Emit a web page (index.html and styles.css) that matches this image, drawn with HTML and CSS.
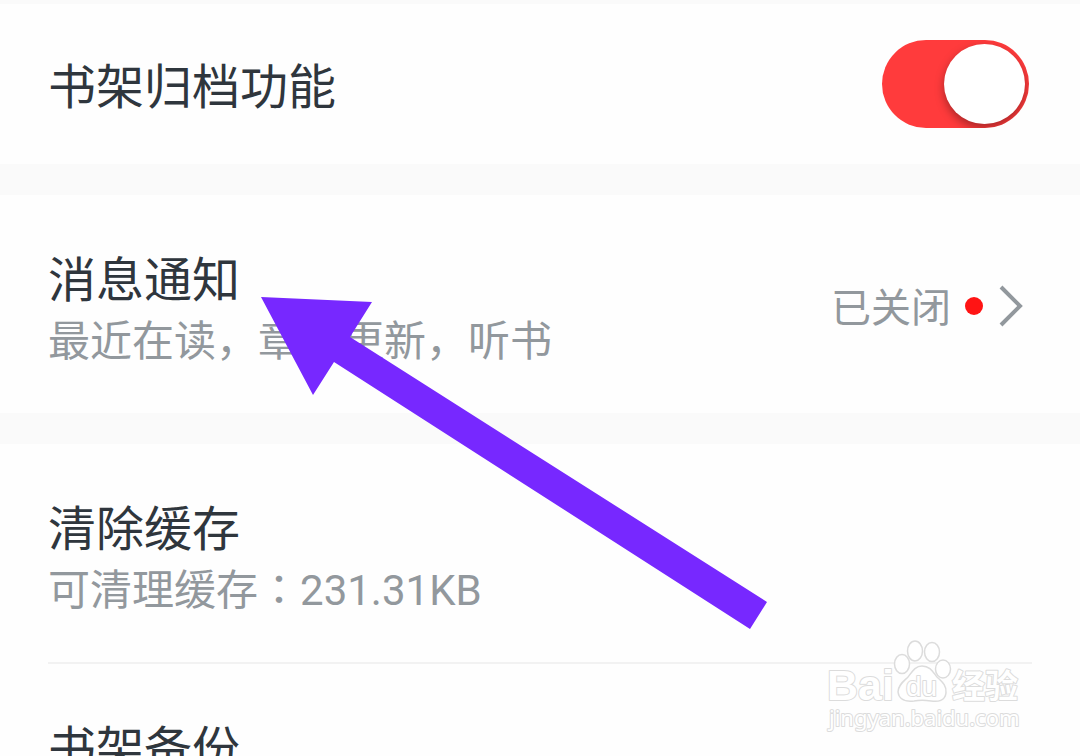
FILE: index.html
```html
<!DOCTYPE html>
<html lang="zh-CN">

<head>
  <meta charset="UTF-8" />
  <meta name="viewport" content="width=device-width, initial-scale=1" />
  <title>设置</title>
  <link rel="stylesheet" href="styles.css">
</head>

<body>

<main class="settings">
  <section class="group">
    <div class="row row-switch">
      <label class="title" for="archive">书架归档功能</label>
      <input type="checkbox" class="switch" id="archive" name="archive" checked />
    </div>
  </section>

  <section class="group">
    <a class="row" href="#notifications">
      <span class="text">
        <span class="title">消息通知</span>
        <span class="desc">最近在读，章节更新，听书</span>
      </span>
      <span class="status">
        <span class="state">已关闭</span>
        <span class="dot"></span>
        <svg class="chevron" viewBox="0 0 24 42" aria-hidden="true">
          <path d="M2 2 L21 21 L2 40" />
        </svg>
      </span>
    </a>
  </section>

  <section class="group">
    <a class="row" href="#cache">
      <span class="text">
        <span class="title">清除缓存</span>
        <span class="desc">可清理缓存<span class="colon" lang="zh-TW">：</span>231.31KB</span>
      </span>
    </a>
    <a class="row" href="#backup">
      <span class="text">
        <span class="title">书架备份</span>
      </span>
    </a>
  </section>

  <!-- Flèche d'annotation -->
  <svg class="arrow" viewBox="0 0 506 332" aria-hidden="true">
    <path d="M0 0 L111 5 L89 40 L506 305 L489 332 L73 65 L52 98 Z" />
  </svg>

  <!-- Filigrane -->
  <svg class="watermark" viewBox="0 0 210 104" role="img" aria-label="Baidu 经验">
    <text class="brand" x="7" y="65">Bai</text>
    <ellipse cx="82" cy="29" rx="7.5" ry="9.5" />
    <ellipse cx="95" cy="16" rx="7.5" ry="10" />
    <ellipse cx="112" cy="17" rx="7.5" ry="9.5" />
    <ellipse cx="123" cy="34" rx="7.5" ry="9" />
    <path d="M102 31 C110 31 113 37 117 42 C121 46 127 50 126 58 C125 66 118 67 111 66 C104 65 100 65 94 66 C86 67 79 65 78 57 C78 50 84 46 88 42 C92 37 95 31 102 31 Z" />
    <text class="du" x="86" y="61">du</text>
    <text class="cn" x="132" y="63">经验</text>
    <text class="url" x="9" y="91">jingyan.baidu.com</text>
  </svg>
</main>

</body>
</html>
```
FILE: styles.css
```css
* {
  box-sizing: border-box;
}
body {
  margin: 0;
  background-color: #fafafa;
  font-family: Roboto, "Noto Sans CJK SC", sans-serif;
  color: #2f363d;
}
.settings {
  position: relative;
  height: 100vh;
  padding-top: 4px;
  overflow: hidden;
}
.group {
  background-color: #fefefe;
  margin-bottom: 31px;
}
.row {
  display: flex;
  align-items: center;
  justify-content: space-between;
  position: relative;
  padding: 54px 51px 42px 48px;
  color: inherit;
  text-decoration: none;
}
.row-switch {
  padding-top: 36px;
  padding-bottom: 36px;
}
.row-switch .title {
  padding-top: 8px;
}
.row + .row {
  padding-top: 56px;
}
/* Séparateur entre deux lignes du même groupe */
.row + .row::before {
  content: "";
  position: absolute;
  top: 0;
  left: 48px;
  right: 48px;
  height: 2px;
  background-color: #f2f2f2;
}
.title,
.desc {
  display: block;
}
.title {
  font-size: 48px;
  line-height: 64px;
}
.desc {
  font-size: 42px;
  line-height: 58px;
  color: #92989d;
}
.colon {
  font-family: "Noto Sans CJK TC", sans-serif;
  line-height: 1;
}
.status {
  display: flex;
  align-items: center;
  margin-bottom: 8px;
  font-size: 40px;
  line-height: 58px;
  color: #92989d;
}
.state {
  padding-top: 6px;
}
.dot {
  width: 18px;
  height: 18px;
  margin: 0 16px 0 14px;
  border-radius: 50%;
  background-color: #ff1414;
}
.chevron {
  width: 24px;
  height: 42px;
  margin-right: 6px;
  fill: none;
  stroke: #92989d;
  stroke-width: 4;
}
.switch {
  appearance: none;
  width: 147px;
  height: 88px;
  margin: 0;
  padding: 4px;
  border-radius: 44px;
  background-color: #ff3b3c;
  overflow: hidden;
  cursor: pointer;
}
.switch::before {
  content: "";
  display: block;
  width: 81px;
  height: 80px;
  border-radius: 50%;
  background-color: #fff;
  box-shadow: 0 4px 10px rgba(0, 0, 0, 0.35);
}
.switch:checked::before {
  margin-left: auto;
}
.arrow {
  position: absolute;
  top: 297px;
  left: 261px;
  width: 506px;
  height: 332px;
  fill: #7728ff;
  pointer-events: none;
}
.watermark {
  position: absolute;
  right: 50px;
  bottom: 17px;
  width: 210px;
  height: 104px;
  fill: #fff;
  stroke: #dcdcdc;
  stroke-width: 1.5;
  pointer-events: none;
}
.watermark text {
  paint-order: stroke;
  stroke-width: 2;
  stroke-linejoin: round;
}
.brand {
  font: bold 43px "Liberation Sans", sans-serif;
}
.du {
  font: 28px "Liberation Sans", sans-serif;
}
.cn {
  font: bold 33px "Noto Sans CJK SC", sans-serif;
}
.url {
  font: 22px "Noto Sans", sans-serif;
}
```
